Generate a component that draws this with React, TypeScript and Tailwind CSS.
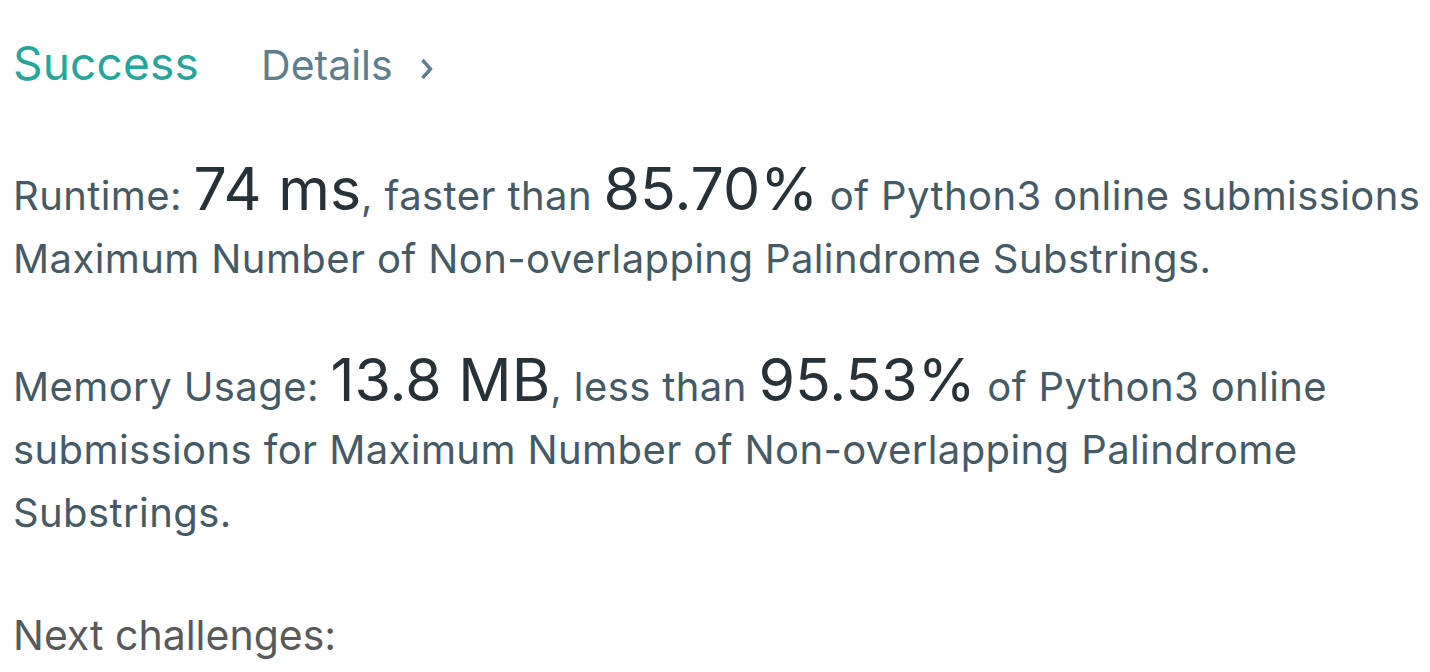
import React from "react";

export default function App() {
  return (
    <div
      className="min-h-[672px] w-[1430px] bg-white pl-[13px] overflow-hidden"
      style={{ fontFamily: "Inter, 'Noto Sans', sans-serif" }}
    >
      <div className="mt-[31px] flex items-baseline h-[64px]">
        <span className="text-[46px] leading-[64px] text-[#26a69a] tracking-[0.2px]">Success</span>
        <span className="ml-[62px] text-[41px] leading-[64px] text-[#607d8b]">Details</span>
        <svg className="ml-[27px]" width="14" height="22" viewBox="0 0 14 22">
          <path d="M2.5 2 L10.5 11 L2.5 20" fill="none" stroke="#607d8b" strokeWidth="3.4" />
        </svg>
      </div>
      <div className="mt-[69px] text-[40px] leading-[63px] text-[#455a64] tracking-[0.4px]">
        Runtime: <span className="text-[59px] leading-[50px] text-[#263238] tracking-normal">74 ms</span>, faster than{" "}
        <span className="text-[59px] leading-[50px] text-[#263238] tracking-normal">85.70%</span> of Python3 online submissions Maximum Number of Non-overlapping Palindrome Substrings.
      </div>
      <div className="mt-[65px] text-[40px] leading-[63px] text-[#455a64] tracking-[0.4px]">
        Memory Usage: <span className="text-[59px] leading-[50px] text-[#263238] tracking-normal">13.8 MB</span>, less than{" "}
        <span className="text-[59px] leading-[50px] text-[#263238] tracking-normal">95.53%</span> of Python3 online submissions for Maximum Number of Non-overlapping Palindrome Substrings.
      </div>
      <div className="mt-[60px] text-[41px] leading-[63px] text-[#595959]">Next challenges:</div>
    </div>
  );
}
